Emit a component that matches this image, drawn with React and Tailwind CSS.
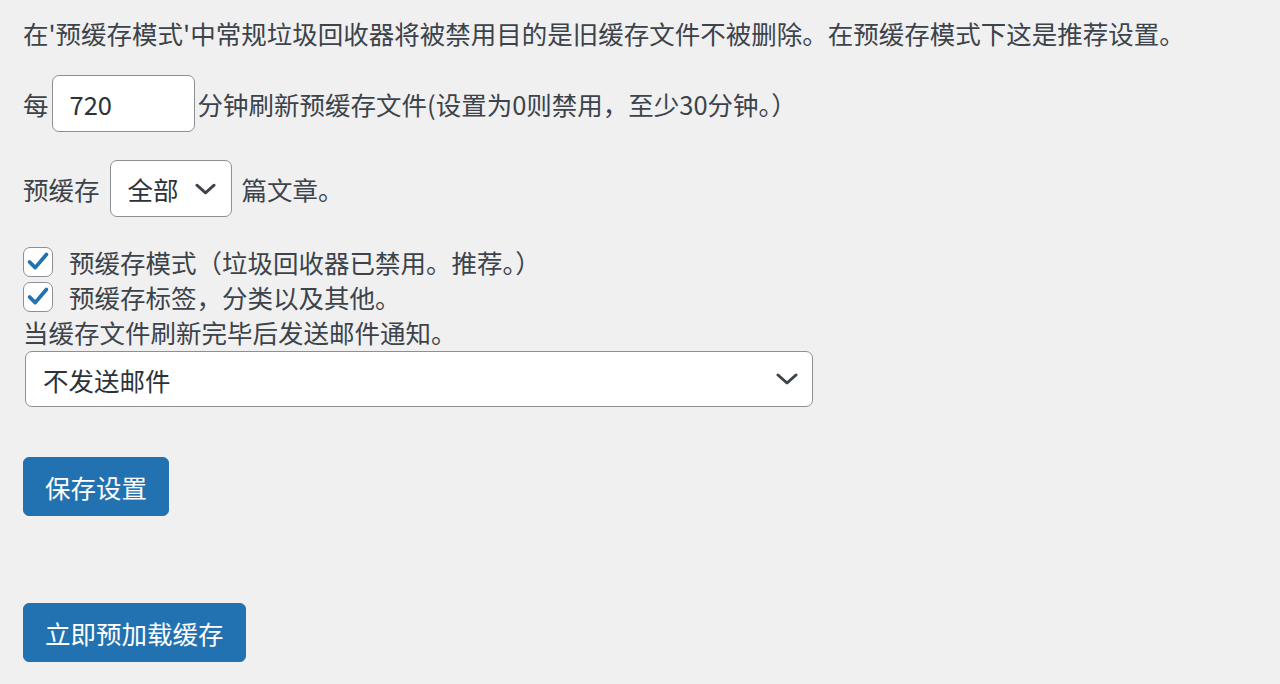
import { useState } from "react";

const Chevron = ({ className }) => (
  <svg viewBox="0 0 22 12" className={className} fill="none">
    <polyline
      points="2,2 11,10 20,2"
      stroke="#3c434a"
      strokeWidth="3"
      strokeLinecap="round"
      strokeLinejoin="round"
    />
  </svg>
);

const CheckRow = ({ checked, onToggle, children }) => (
  <label className="flex items-center h-[35px] cursor-pointer" onClick={onToggle}>
    <span className="flex items-center justify-center w-[30px] h-[30px] bg-white border border-[#8c8f94] rounded-[7px] shrink-0">
      {checked && (
        <svg viewBox="0 0 30 30" className="w-[30px] h-[30px]" fill="none">
          <polyline
            points="6,15 12,21 24,7"
            stroke="#2271b1"
            strokeWidth="4"
            strokeLinecap="round"
            strokeLinejoin="round"
          />
        </svg>
      )}
    </span>
    <span className="ml-[16px]">{children}</span>
  </label>
);

export default function App() {
  const [minutes, setMinutes] = useState("720");
  const [posts, setPosts] = useState("all");
  const [mode, setMode] = useState(true);
  const [tags, setTags] = useState(true);
  const [mail, setMail] = useState("none");

  return (
    <div className="min-h-screen bg-[#f0f0f1] px-[23px] pt-[15px] text-[25.5px] leading-[35px] text-[#3c434a] font-['Noto_Sans_CJK_SC','Noto_Sans',sans-serif]">
      <p>在'预缓存模式'中常规垃圾回收器将被禁用目的是旧缓存文件不被删除。在预缓存模式下这是推荐设置。</p>

      <div className="flex items-center mt-[25px]">
        <span>每</span>
        <input
          type="text"
          value={minutes}
          onChange={(e) => setMinutes(e.target.value)}
          className="mx-[3px] w-[143px] h-[57px] px-[17px] bg-white border border-[#8c8f94] rounded-[7px] text-[#2c3338] outline-none"
        />
        <span>分钟刷新预缓存文件(设置为0则禁用，至少30分钟。）</span>
      </div>

      <div className="flex items-center mt-[28px]">
        <span>预缓存</span>
        <div className="relative ml-[10px] mr-[10px]">
          <select
            value={posts}
            onChange={(e) => setPosts(e.target.value)}
            className="appearance-none w-[122px] h-[57px] pl-[17px] pr-[40px] bg-white border border-[#8c8f94] rounded-[7px] text-[#2c3338] outline-none"
          >
            <option value="all">全部</option>
            <option value="10">10</option>
            <option value="50">50</option>
          </select>
          <Chevron className="pointer-events-none absolute right-[16px] top-[23px] w-[21px] h-[12px]" />
        </div>
        <span>篇文章。</span>
      </div>

      <div className="mt-[27px]">
        <CheckRow checked={mode} onToggle={() => setMode(!mode)}>
          预缓存模式（垃圾回收器已禁用。推荐。）
        </CheckRow>
        <CheckRow checked={tags} onToggle={() => setTags(!tags)}>
          预缓存标签，分类以及其他。
        </CheckRow>
        <p>当缓存文件刷新完毕后发送邮件通知。</p>
      </div>

      <div className="relative mt-[2px] ml-[2px] w-[788px]">
        <select
          value={mail}
          onChange={(e) => setMail(e.target.value)}
          className="appearance-none w-full h-[56px] pl-[17px] pr-[50px] bg-white border border-[#8c8f94] rounded-[7px] text-[#2c3338] outline-none"
        >
          <option value="none">不发送邮件</option>
          <option value="many">发送多封邮件</option>
          <option value="one">只发送一封邮件</option>
        </select>
        <Chevron className="pointer-events-none absolute right-[15px] top-[22px] w-[22px] h-[12px]" />
      </div>

      <button className="block mt-[50px] h-[59px] px-[21px] bg-[#2271b1] border border-[#2271b1] rounded-[6px] text-white">
        保存设置
      </button>

      <button className="block mt-[87px] h-[59px] px-[21px] bg-[#2271b1] border border-[#2271b1] rounded-[6px] text-white">
        立即预加载缓存
      </button>
    </div>
  );
}
